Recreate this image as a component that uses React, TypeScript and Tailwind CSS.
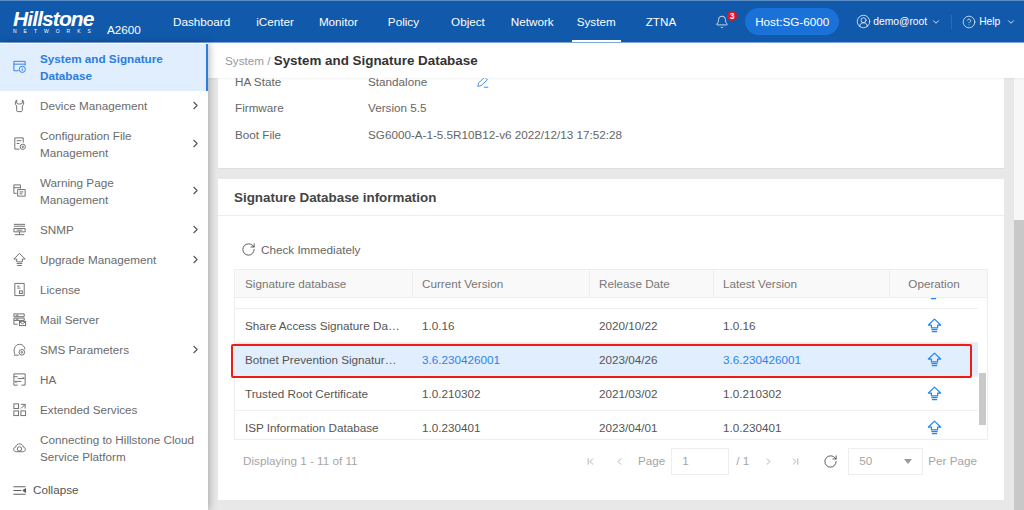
import type { ReactNode } from "react";
import { ChevronRight, ChevronDown, ChevronLeft, RotateCw, Bell, CircleUserRound, CircleHelp, ChevronFirst, ChevronLast } from "lucide-react";

const Ico = ({ children, className = "" }: { children: ReactNode; className?: string }) => (
  <svg viewBox="0 0 16 16" fill="none" stroke="currentColor" strokeWidth="1" className={`w-[15px] h-[15px] ${className}`}>
    {children}
  </svg>
);

const UpgradeIcon = ({ className = "" }: { className?: string }) => (
  <Ico className={`!w-[15px] !h-[15px] ${className}`}>
    <path d="M8 1.200 14.500 7.500H11.300V10.500H4.700V7.500H1.500Z" strokeWidth="1.300" strokeLinejoin="round" />
    <path d="M4.700 12.300H11.300M5.200 14.500H10.800" strokeWidth="1.300" />
  </Ico>
);

const navItems = [
  { n: "Dashboard", c: "ml-0" },
  { n: "iCenter", c: "ml-[26px]" },
  { n: "Monitor", c: "ml-[25px]" },
  { n: "Policy", c: "ml-[30px]" },
  { n: "Object", c: "ml-[32px]" },
  { n: "Network", c: "ml-[26px]" },
  { n: "System", c: "ml-[18px] px-[5px] border-b-2 border-b-white pt-[2px]" },
  { n: "ZTNA", c: "ml-[25px]" },
];

const sideItems: { label: ReactNode; icon: ReactNode; arrow?: boolean; h: string }[] = [
  {
    label: <>Device Management</>, arrow: true, h: "h-[29px]",
    icon: <Ico><path d="M5 2C3 3.500 3 7 5 8.500V13.500C5 14.200 5.500 14.500 6 14.500H10C10.500 14.500 11 14.200 11 13.500V8.500C13 7 13 3.500 11 2V5.500C10 6.800 6 6.800 5 5.500Z" /></Ico>,
  },
  {
    label: <>Configuration File<br />Management</>, arrow: true, h: "h-[47px]",
    icon: <Ico><path d="M8 14H3V2H12V7M5 5H10M5 8H8" /><circle cx="11.500" cy="11.500" r="2.800" /><circle cx="11.500" cy="11.500" r="0.800" /></Ico>,
  },
  {
    label: <>Warning Page<br />Management</>, arrow: true, h: "h-[47px]",
    icon: <Ico><path d="M2 2H9V6M2 2V11H5M2 5H9M6 7H14V14H6ZM8 9.500H12M8 11.500H11" /></Ico>,
  },
  {
    label: <>SNMP</>, arrow: true, h: "h-[30px]",
    icon: <Ico><path d="M2 2.500H14M2 4.500H14M2 7H14V10.500H2ZM5 8.700H11M8 10.500V13M3 13.500H13" /></Ico>,
  },
  { label: <>Upgrade Management</>, arrow: true, h: "h-[30px]", icon: <Ico><path d="M8 1.500 14 7.500H11V10.500H5V7.500H2Z" strokeLinejoin="round" /><path d="M5 12.300H11M5.500 14.400H10.500" /></Ico> },
  {
    label: <>License</>, h: "h-[30px]",
    icon: <Ico><path d="M3 1.500H13V14.500H3ZM5.500 4.500H8M5.500 6.500H9" /><rect x="8" y="9.500" width="3" height="2.800" /></Ico>,
  },
  {
    label: <>Mail Server</>, h: "h-[30px]",
    icon: <Ico><path d="M2 2H13V5H2ZM2 6.500H13V9H2ZM2 9V13H6M4 3.500H7M4 7.700H7" /><rect x="8" y="10" width="6.500" height="4.500" /><path d="M8 10.500 11.200 12.500 14.500 10.500" /></Ico>,
  },
  {
    label: <>SMS Parameters</>, arrow: true, h: "h-[30px]",
    icon: <Ico><path d="M3 13C1 9 3 2.500 8 2.500C12 2.500 14 5.500 13.500 8M2 14H7" /><circle cx="10.500" cy="11" r="3" /><circle cx="10.500" cy="11" r="0.900" /></Ico>,
  },
  {
    label: <>HA</>, h: "h-[30px]",
    icon: <Ico><path d="M6 14H2V2H14V14H10M2 5H6M6 7H13L11 5M10 10H3L5 12" /></Ico>,
  },
  {
    label: <>Extended Services</>, h: "h-[30px]",
    icon: <Ico><rect x="2" y="2" width="5" height="5" /><rect x="2" y="9.500" width="5" height="5" /><rect x="9.500" y="9.500" width="5" height="5" /><path d="M9.500 2.500H14V7M14 2.500 9.500 7" /></Ico>,
  },
  {
    label: <>Connecting to Hillstone Cloud<br />Service Platform</>, h: "h-[47px]",
    icon: <Ico><path d="M4.500 12.500C1 12.500 0.800 8 4 7.500C4.500 3 11.500 3 12 7.500C15.200 8 15 12.500 11.500 12.500Z" /><circle cx="8" cy="9.500" r="2.300" /></Ico>,
  },
];

const rows = [
  { name: "Share Access Signature Da…", cur: "1.0.16", date: "2020/10/22", last: "1.0.16" },
  { name: "Botnet Prevention Signatur…", cur: "3.6.230426001", date: "2023/04/26", last: "3.6.230426001", on: true },
  { name: "Trusted Root Certificate", cur: "1.0.210302", date: "2021/03/02", last: "1.0.210302" },
  { name: "ISP Information Database", cur: "1.0.230401", date: "2023/04/01", last: "1.0.230401" },
];

const info = [
  { k: "HA State", v: "Standalone", edit: true },
  { k: "Firmware", v: "Version 5.5" },
  { k: "Boot File", v: "SG6000-A-1-5.5R10B12-v6 2022/12/13 17:52:28" },
];

export default function App() {
  return (
    <div className="relative w-[1024px] h-[510px] overflow-hidden flex flex-col bg-[#e8e8e8] text-[11.700px] text-[#5f5f5f] font-['Liberation_Sans',Arial,sans-serif]">
      <header className="h-[43px] shrink-0 flex bg-[#1159ab] border-t border-t-[#5b8cc4] border-b border-b-[#7fa6d6] text-white">
        <div className="w-[173px] shrink-0 flex pl-[13px]">
          <div className="w-[94px] flex flex-col pt-[8px] leading-none">
            <span className="text-[21px] font-bold italic tracking-[-0.900px] h-[19px] leading-[19px]">Hillstone</span>
            <span className="text-[5px] tracking-[7px] mt-[1px] whitespace-nowrap">NETWORKS</span>
          </div>
          <span className="mt-[22px] leading-[13px]">A2600</span>
        </div>
        <nav className="flex">
          {navItems.map((i) => (
            <div key={i.n} className={`h-[41px] flex items-center ${i.c}`}>{i.n}</div>
          ))}
        </nav>
        <div className="flex items-center ml-[39px] h-[41px]">
          <div className="relative">
            <Bell className="w-[14px] h-[16px]" strokeWidth={1.300} />
            <span className="absolute -top-[3px] -right-[8px] w-[10px] h-[10px] rounded-full bg-[#e8141c] text-[8.500px] font-bold leading-[10px] text-center">3</span>
          </div>
          <div className="ml-[16px] w-[94px] h-[27px] rounded-[14px] bg-[#1a72d8] flex items-center justify-center">Host:SG-6000</div>
          <CircleUserRound className="w-[15px] h-[15px] ml-[17px]" strokeWidth={1.200} />
          <span className="ml-[2px] text-[10.300px]">demo@root</span>
          <ChevronDown className="w-[10px] h-[10px] ml-[4px]" />
          <div className="w-px h-[14px] bg-[#2a6cb8] ml-[10px]" />
          <CircleHelp className="w-[14px] h-[14px] ml-[10px]" strokeWidth={1.200} />
          <span className="ml-[3px] text-[10.300px]">Help</span>
          <ChevronDown className="w-[10px] h-[10px] ml-[6px]" />
        </div>
      </header>

      <div className="flex-1 flex min-h-0">
        <aside className="w-[208px] shrink-0 bg-white flex flex-col shadow-[2px_0_7px_rgba(0,0,0,0.25)] z-10">
          <div className="h-[47px] shrink-0 mt-px pb-[2px] flex items-center bg-[#e1eefd] border-r-2 border-r-[#2b7de0] text-[#2b7de0] font-bold">
            <Ico className="ml-[12px] mr-[13px] shrink-0">
              <path d="M7 12.500H2V2.500H14V7M2 5.500H14" />
              <circle cx="11" cy="11" r="3.300" />
              <path d="M11 10V12.500M11 8.800V9.200" />
            </Ico>
            <div className="leading-[17px]">System and Signature<br />Database</div>
          </div>
          {sideItems.map((s, i) => (
            <div key={i} className={`${s.h} flex items-center shrink-0 text-[#6b6b6b]`}>
              <span className="ml-[12px] mr-[13px] shrink-0">{s.icon}</span>
              <div className="leading-[17px] flex-1 whitespace-nowrap">{s.label}</div>
              {s.arrow && <ChevronRight className="w-[13px] h-[13px] mr-[6px] text-[#555]" />}
            </div>
          ))}
          <div className="flex items-center h-[30px] mt-[4px] text-[#555]">
            <Ico className="ml-[12px] mr-[6px]">
              <path d="M1.500 4H14.500M1.500 8H10M1.500 12H14.500" />
              <path d="M14.500 6V10L11.500 8Z" fill="currentColor" />
            </Ico>
            Collapse
          </div>
        </aside>

        <main className="flex-1 min-w-0 flex flex-col">
          <div className="h-[35px] shrink-0 bg-white flex items-center pl-[17px] pt-px shadow-[0_1px_2px_rgba(0,0,0,0.05)] z-[5]">
            <span className="text-[#999]">System /&nbsp;</span>
            <span className="text-[13.400px] font-bold text-[#333]">System and Signature Database</span>
          </div>
          <div className="flex-1 min-h-0 flex overflow-hidden">
            <div className="flex-1 min-w-0 px-[10px] overflow-hidden">
              <div className="h-[101px] -mt-[10px] bg-white pl-[17px] pt-[0.500px] border-b border-b-[#e0e0e0]">
                {info.map((r) => (
                  <div key={r.k} className="h-[26.500px] flex items-center text-[#666]">
                    <span className="w-[133px] shrink-0">{r.k}</span>
                    <span>{r.v}</span>
                    {r.edit && (
                      <Ico className="ml-[49px] !w-[14px] !h-[14px] text-[#2b84e8]">
                        <path d="M2 13 3 9 10 2.500 13 5.500 6 12ZM9 14H14" />
                      </Ico>
                    )}
                  </div>
                ))}
              </div>
              <div className="mt-[10px] h-[321px] bg-white flex flex-col">
                <div className="h-[37px] shrink-0 flex items-center pl-[16px] pt-[3px] text-[13.400px] font-bold text-[#444] border-b border-b-[#eeeeee]">
                  Signature Database information
                </div>
                <div className="h-[53px] shrink-0 flex items-center pl-[23px] pt-[14px] text-[#666]">
                  <RotateCw className="w-[15px] h-[15px] mr-[5px] text-[#444]" strokeWidth={1.400} />
                  Check Immediately
                </div>
                <div className="relative mx-[16px] h-[171px] border border-[#eeeeee] flex flex-col overflow-hidden">
                  <div className="h-[28px] shrink-0 flex bg-[#f9f9f9] border-b border-b-[#eeeeee] text-[#777]">
                    <div className="w-[178px] flex items-center pl-[10px] border-r border-r-[#eeeeee]">Signature database</div>
                    <div className="w-[177px] flex items-center pl-[9px] border-r border-r-[#eeeeee]">Current Version</div>
                    <div className="w-[124px] flex items-center pl-[9px] border-r border-r-[#eeeeee]">Release Date</div>
                    <div className="w-[176px] flex items-center pl-[9px] border-r border-r-[#eeeeee]">Latest Version</div>
                    <div className="flex-1 flex items-center justify-center pr-[9px]">Operation</div>
                  </div>
                  <div className="flex-1 min-h-0 flex">
                    <div className="flex-1 min-w-0 overflow-hidden">
                      <div className="h-[11px] border-b border-b-[#eeeeee] relative overflow-hidden">
                        <UpgradeIcon className="absolute left-[691px] -top-[13px] text-[#1e88f5]" />
                      </div>
                      {rows.map((r) => (
                        <div key={r.name} className={`h-[34px] flex items-center border-b border-b-[#f0f0f0] text-[#555] ${r.on ? "bg-[#e1eefd]" : ""}`}>
                          <div className="w-[178px] pl-[10px] whitespace-nowrap">{r.name}</div>
                          <div className={`w-[177px] pl-[9px] ${r.on ? "text-[#2b84e8]" : ""}`}>{r.cur}</div>
                          <div className="w-[124px] pl-[9px]">{r.date}</div>
                          <div className={`w-[176px] pl-[9px] ${r.on ? "text-[#2b84e8]" : ""}`}>{r.last}</div>
                          <div className="flex-1 flex justify-center">
                            <UpgradeIcon className="text-[#1e88f5]" />
                          </div>
                        </div>
                      ))}
                    </div>
                    <div className="w-[9px] shrink-0 flex flex-col">
                      <div className="h-[75px]" />
                      <div className="h-[52px] w-[7px] ml-px bg-[#c9c9c9]" />
                    </div>
                  </div>
                </div>
                <div className="flex items-center h-[42px] pl-[25px] text-[#a5a5a5]">
                  <span className="w-[342px] whitespace-nowrap">Displaying 1 - 11 of 11</span>
                  <ChevronFirst className="w-[11px] h-[11px] text-[#aaa]" />
                  <ChevronLeft className="w-[11px] h-[11px] ml-[18px] text-[#aaa]" />
                  <span className="ml-[13px]">Page</span>
                  <div className="ml-[6px] w-[58px] h-[27px] border border-[#eeeeee] flex items-center pl-[10px]">1</div>
                  <span className="ml-[7px]">/ 1</span>
                  <ChevronRight className="w-[11px] h-[11px] ml-[14px] text-[#aaa]" />
                  <ChevronLast className="w-[11px] h-[11px] ml-[16px] text-[#aaa]" />
                  <RotateCw className="w-[15px] h-[15px] ml-[22px] text-[#444]" strokeWidth={1.400} />
                  <div className="ml-[10px] w-[75px] h-[27px] border border-[#eeeeee] flex items-center justify-between px-[10px]">
                    50
                    <span className="w-0 h-0 border-x-[4px] border-x-transparent border-t-[5px] border-t-[#999]" />
                  </div>
                  <span className="ml-[5px]">Per Page</span>
                </div>
              </div>
            </div>
            <div className="w-[10px] shrink-0 bg-[#f7f7f7] flex flex-col">
              <div className="h-[142px]" />
              <div className="flex-1 bg-[#c8c8c8]" />
            </div>
          </div>
        </main>
      </div>
      <div className="absolute left-[231px] top-[344px] w-[741px] h-[34px] border-2 border-[#f01c14] rounded-[2px] pointer-events-none z-20" />
    </div>
  );
}
